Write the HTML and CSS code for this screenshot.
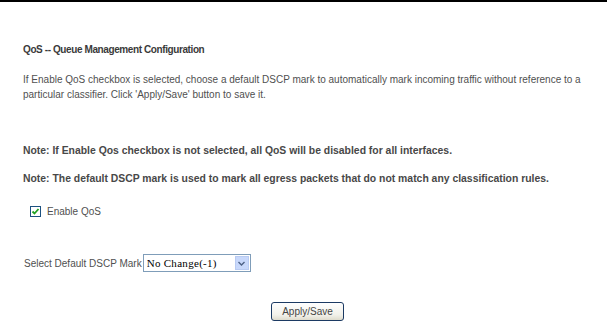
FILE: index.html
```html
<!DOCTYPE html>
<html lang="en">
<head>
  <meta charset="UTF-8" />
  <title>QoS Queue Management</title>
  <link rel="stylesheet" href="styles.css">
</head>
<body>
  <div class="topbar"></div>
  <form class="page">
    <h1 class="title">QoS -- Queue Management Configuration</h1>

    <p class="intro">If Enable QoS checkbox is selected, choose a default DSCP mark to automatically mark incoming traffic without reference to a particular classifier. Click 'Apply/Save' button to save it.</p>

    <p class="note">Note: If Enable Qos checkbox is not selected, all QoS will be disabled for all interfaces.</p>
    <p class="note second">Note: The default DSCP mark is used to mark all egress packets that do not match any classification rules.</p>

    <label class="check-row">
      <span class="check-box">
        <svg width="9" height="9" viewBox="0 0 9 9"><path d="M1.5 4.5 L3.5 6.5 L7.5 2" fill="none" stroke="#21a121" stroke-width="1.8"/></svg>
      </span>
      Enable QoS
    </label>

    <div class="select-row">
      <span class="select-label">Select Default DSCP Mark</span>
      <span class="select-wrap">
        <select class="dscp">
          <option>No Change(-1)</option>
          <option>default(000000)</option>
          <option>AF13(001110)</option>
        </select>
        <span class="select-arrow">
          <svg width="7" height="5" viewBox="0 0 7 5"><path d="M0.5 1 L3.5 4 L6.5 1" fill="none" stroke="#4d6185" stroke-width="1.4"/></svg>
        </span>
      </span>
    </div>

    <div class="actions">
      <button type="button" class="btn">Apply/Save</button>
    </div>
  </form>
</body>
</html>
```

FILE: styles.css
```css
/* Base */
* {
  margin: 0;
  padding: 0;
  box-sizing: border-box;
}
body {
  font-family: "Liberation Sans", Arial, sans-serif;
  font-size: 10px;
  color: #505050;
  background: #fff;
  width: 607px;
  height: 325px;
  overflow: hidden;
}
.topbar {
  height: 2px;
  background: #000;
}
.page {
  padding: 41px 0 0 23px;
}
/* Headings and text */
.title {
  font-size: 10px;
  letter-spacing: -0.4px;
  font-weight: bold;
  color: #3a3a3a;
  line-height: 14px;
}
.intro {
  margin-top: 15px;
  line-height: 15px;
  width: 572px;
}
.note {
  margin-top: 42px;
  font-size: 10.4px;
  font-weight: bold;
  color: #484848;
  line-height: 14px;
}
.note.second {
  margin-top: 14px;
}
/* Checkbox */
.check-row {
  display: flex;
  align-items: center;
  gap: 6px;
  margin: 18px 0 0 7px;
  height: 14px;
}
.check-box {
  width: 11px;
  height: 11px;
  border: 1px solid #1c5180;
  background: #fff;
  display: flex;
  align-items: center;
  justify-content: center;
}
/* Select */
.select-row {
  display: flex;
  align-items: center;
  gap: 1px;
  margin: 36px 0 0 1px;
}
.select-wrap {
  position: relative;
  display: inline-block;
}
.dscp {
  appearance: none;
  -webkit-appearance: none;
  width: 108px;
  height: 18px;
  border: 1px solid #7f9db9;
  background: #fff;
  font-family: "Liberation Serif", serif;
  font-size: 11px;
  letter-spacing: 0.3px;
  color: #000;
  padding: 0 0 0 3px;
  border-radius: 0;
}
.select-arrow {
  position: absolute;
  right: 2px;
  top: 2px;
  width: 14px;
  height: 14px;
  background: #c8d8fb;
  border: 1px solid #b9cbf2;
  display: flex;
  align-items: center;
  justify-content: center;
  pointer-events: none;
}
/* Button */
.actions {
  display: flex;
  justify-content: center;
  padding-right: 15px;
  margin-top: 30px;
}
.btn {
  width: 73px;
  height: 19px;
  border: 1px solid #1c3a63;
  border-radius: 3px;
  background: linear-gradient(#fefefe, #f2f1ea 70%, #dedbcc);
  font-family: "Liberation Sans", Arial, sans-serif;
  font-size: 10px;
  color: #444;
}
```
